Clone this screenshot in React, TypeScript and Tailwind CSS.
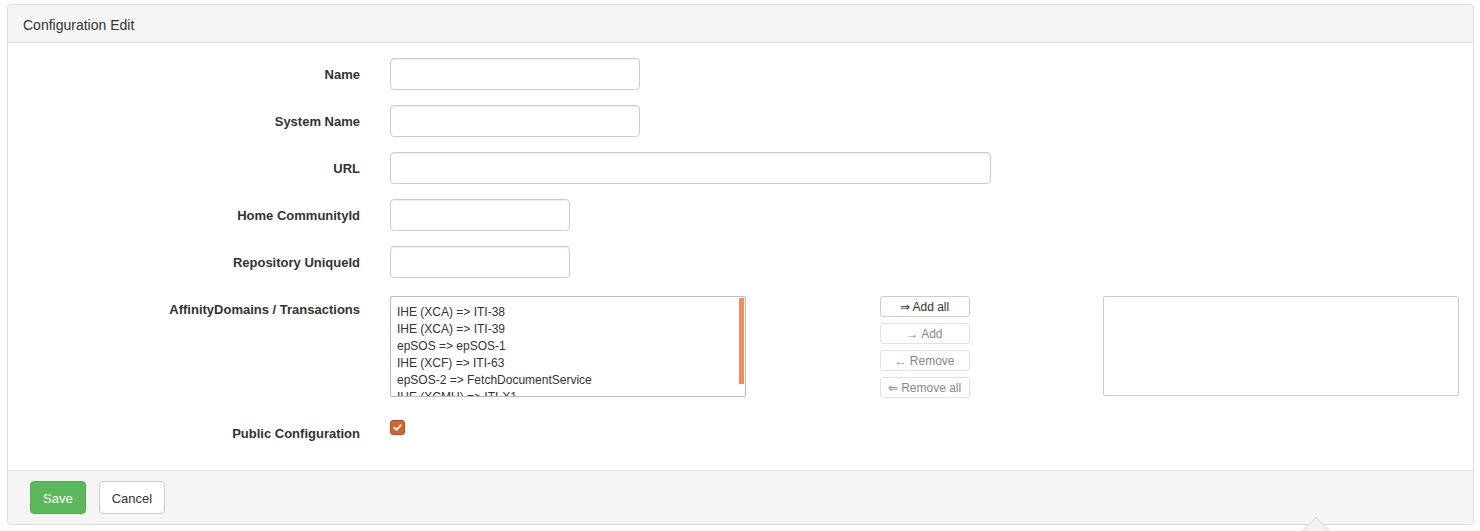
import React from 'react';

const font = { fontFamily: '"Liberation Sans", Arial, Helvetica, sans-serif' };

const leftItems = [
  'IHE (XCA) => ITI-38',
  'IHE (XCA) => ITI-39',
  'epSOS => epSOS-1',
  'IHE (XCF) => ITI-63',
  'epSOS-2 => FetchDocumentService',
  'IHE (XCMU) => ITI-X1',
];

function Field({ label, width, className = '' }: { label: string; width: string; className?: string }) {
  return (
    <div className={`flex items-center ${className}`}>
      <label className="w-[352px] pt-[1px] text-right text-[13px] font-bold text-[#333]">{label}</label>
      <input type="text" className={`ml-[30px] h-[32px] ${width} rounded-[4px] border border-[#ccc] bg-white px-3 text-[13px] shadow-[inset_0_1px_1px_rgba(0,0,0,0.075)] outline-none`} />
    </div>
  );
}

export default function App() {
  return (
    <div className="relative min-h-[531px] bg-white pt-[4px]" style={font}>
      <div className="mx-[7px] w-[1467px] rounded-[4px] border border-[#ddd] bg-white">
        <div className="h-[38px] rounded-t-[4px] border-b border-[#ddd] bg-[#f5f5f5] pl-[15px] pt-[1px] text-[14px] leading-[38px] text-[#333]">
          Configuration Edit
        </div>

        <div className="pt-[15px] pb-[26px]">
          <Field label="Name" width="w-[250px]" />
          <Field label="System Name" width="w-[250px]" className="mt-[15px]" />
          <Field label="URL" width="w-[601px]" className="mt-[15px]" />
          <Field label="Home CommunityId" width="w-[180px]" className="mt-[15px]" />
          <Field label="Repository UniqueId" width="w-[180px]" className="mt-[15px]" />

          <div className="mt-[18px] flex items-start">
            <label className="w-[352px] pt-[4px] text-right text-[13px] font-bold text-[#333]">AffinityDomains / Transactions</label>
            <div className="ml-[30px] flex w-[1069px] items-start justify-between">
              <div className="relative h-[101px] w-[356px] overflow-hidden rounded-[2px] border border-[#bbb] bg-white pl-[6px] pt-[7px] text-[12px] leading-[17px] text-[#333]">
                {leftItems.map((it) => (
                  <div key={it} className="whitespace-nowrap">{it}</div>
                ))}
                <div className="absolute right-[1px] top-[1px] h-[86px] w-[5px] bg-[#f48b5d]" />
              </div>
              <div className="flex w-[90px] flex-col gap-[6px] text-[12px]">
                <button className="h-[21px] rounded-[3px] border border-[#ccc] bg-white pt-[1px] leading-[19px] text-[#333]">⇒ Add all</button>
                <button className="h-[21px] rounded-[3px] border border-[#e2e2e2] bg-white pt-[1px] leading-[19px] text-[#888]">→ Add</button>
                <button className="h-[21px] rounded-[3px] border border-[#e2e2e2] bg-white pt-[1px] leading-[19px] text-[#888]">← Remove</button>
                <button className="h-[21px] rounded-[3px] border border-[#e2e2e2] bg-white pt-[1px] leading-[19px] text-[#888]">⇐ Remove all</button>
              </div>
              <div className="h-[100px] w-[356px] rounded-[2px] border border-[#ccc] bg-white" />
            </div>
          </div>

          <div className="mt-[22px] flex items-start">
            <label className="w-[352px] pt-[4px] text-right text-[13px] font-bold text-[#333]">Public Configuration</label>
            <div className="ml-[30px] flex h-[15px] w-[15px] items-center justify-center rounded-[3px] border border-[#b5502a] bg-[#d6632f]">
              <svg width="11" height="11" viewBox="0 0 12 12">
                <path d="M2.5 6.2 L5 8.6 L9.6 3.4" fill="none" stroke="#fff" strokeWidth="2" strokeLinecap="round" strokeLinejoin="round" />
              </svg>
            </div>
          </div>
        </div>

        <div className="flex h-[54px] items-center gap-[13px] rounded-b-[4px] border-t border-[#ddd] bg-[#f5f5f5] pl-[22px]">
          <button className="h-[33px] rounded-[4px] border border-[#4cae4c] bg-[#5cb85c] px-[12px] pt-[3px] text-[13px] text-white">Save</button>
          <button className="h-[33px] rounded-[4px] border border-[#ccc] bg-white px-[12px] pt-[3px] text-[13px] text-[#333]">Cancel</button>
        </div>
      </div>
      <div className="absolute left-[1306px] top-[521px] h-[20px] w-[20px] rotate-45 border-l border-t border-[#ddd] bg-[#f3f3f3]" />
    </div>
  );
}
